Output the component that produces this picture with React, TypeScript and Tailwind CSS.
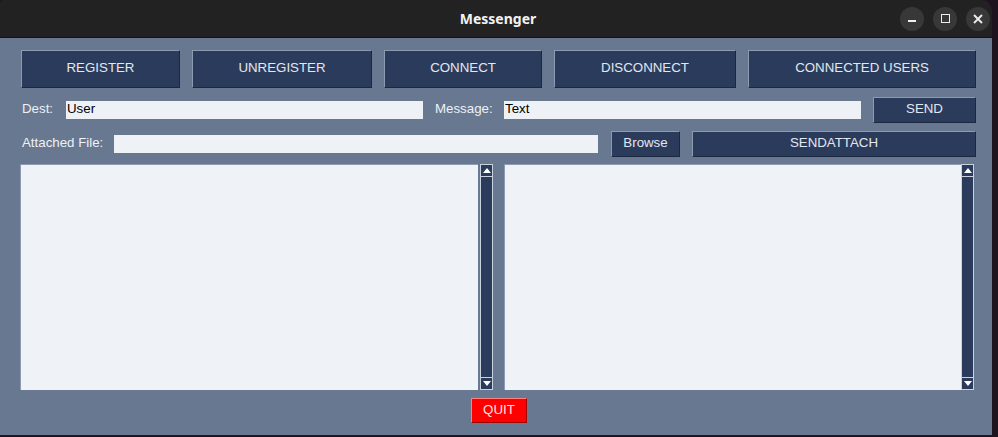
import React from "react";

const btn =
  "flex items-center justify-center bg-[#2b3b5c] text-[#e3e8f0] text-[13.3px] border border-t-[#8c9bb2] border-l-[#8c9bb2] border-b-[#1c2740] border-r-[#1c2740]";

function ScrollBar() {
  return (
    <div className="w-[13px] h-full flex flex-col bg-[#2b3b5c] border border-[#c9d2de]">
      <div className="h-[12px] flex items-center justify-center border-b border-[#c9d2de]">
        <svg width="8" height="5" viewBox="0 0 8 5">
          <path d="M0 5 L4 0 L8 5 Z" fill="#ffffff" />
        </svg>
      </div>
      <div className="flex-1" />
      <div className="h-[12px] flex items-center justify-center border-t border-[#c9d2de]">
        <svg width="8" height="5" viewBox="0 0 8 5">
          <path d="M0 0 L4 5 L8 0 Z" fill="#ffffff" />
        </svg>
      </div>
    </div>
  );
}

export default function App() {
  const font = { fontFamily: '"Liberation Sans", Arial, sans-serif' };
  return (
    <div className="w-[998px] h-[437px] bg-[#1d1420] overflow-hidden" style={font}>
      <div className="w-[992px] h-[436px] flex flex-col rounded-tl-[4px] rounded-tr-[11px] overflow-hidden">
        {/* Title bar */}
        <div className="h-[38px] bg-[#222222] border-b border-[#141414] flex items-center">
          <div
            className="flex-1 text-center text-[14px] font-bold text-[#f2f2f2] pl-[96px]"
            style={{ fontFamily: '"Noto Sans", "DejaVu Sans", sans-serif' }}
          >
            Messenger
          </div>
          <div className="flex items-center gap-[9px] pr-[2px]">
            <div className="w-[24px] h-[24px] rounded-full bg-[#383838] flex items-center justify-center">
              <div className="w-[8px] h-[2px] bg-[#eeeeee] mt-[4px]" />
            </div>
            <div className="w-[24px] h-[24px] rounded-full bg-[#383838] flex items-center justify-center">
              <div className="w-[9px] h-[9px] border-[1.5px] border-[#eeeeee]" />
            </div>
            <div className="w-[24px] h-[24px] rounded-full bg-[#383838] flex items-center justify-center">
              <svg width="10" height="10" viewBox="0 0 10 10">
                <path d="M1 1 L9 9 M9 1 L1 9" stroke="#eeeeee" strokeWidth="1.8" />
              </svg>
            </div>
          </div>
        </div>

        {/* Body */}
        <div className="flex-1 bg-[#687890] pl-[20px] pr-[16px] pt-[12px] flex flex-col border-b border-[#1a1a22]">
          {/* Top buttons */}
          <div className="flex gap-[12px] h-[38px] pl-[1px] leading-none">
            <div className={`${btn} w-[159px] pb-[3px]`}>REGISTER</div>
            <div className={`${btn} w-[180px] pb-[3px]`}>UNREGISTER</div>
            <div className={`${btn} w-[158px] pb-[3px]`}>CONNECT</div>
            <div className={`${btn} w-[182px] pb-[3px]`}>DISCONNECT</div>
            <div className={`${btn} w-[228px] pb-[3px]`}>CONNECTED USERS</div>
          </div>

          {/* Dest / Message row */}
          <div className="flex items-center h-[26px] mt-[9px] pl-[2px] text-[13.3px] text-[#eef1f5]">
            <span className="w-[44px] pb-[2px]">Dest:</span>
            <div className="w-[357px] h-[18px] bg-[#eef2f7] text-black px-[1px] leading-[16px]">User</div>
            <span className="ml-[12px] w-[69px] pb-[2px]">Message:</span>
            <div className="w-[357px] h-[18px] bg-[#eef2f7] text-black px-[1px] leading-[16px]">Text</div>
            <div className={`${btn} ml-[12px] w-[103px] h-[26px] pb-[2px]`}>SEND</div>
          </div>

          {/* Attach row */}
          <div className="flex items-center h-[26px] mt-[8px] pl-[2px] text-[13.3px] text-[#eef1f5]">
            <span className="w-[92px] pb-[2px]">Attached File:</span>
            <div className="w-[484px] h-[18px] bg-[#eef2f7]" />
            <div className={`${btn} ml-[13px] w-[69px] h-[26px] pb-[2px]`}>Browse</div>
            <div className={`${btn} ml-[12px] w-[284px] h-[26px] pb-[2px]`}>SENDATTACH</div>
          </div>

          {/* Text areas */}
          <div className="flex h-[226px] mt-[7px]">
            <div className="w-[458px] h-full bg-[#eff3f8] border-l border-t border-[#8c9bb2]" />
            <div className="ml-[2px] h-full">
              <ScrollBar />
            </div>
            <div className="ml-[11px] w-[457px] h-full bg-[#eff3f8] border-l border-t border-[#8c9bb2]" />
            <div className="h-full">
              <ScrollBar />
            </div>
          </div>

          {/* Quit */}
          <div className="flex justify-center mt-[8px] pl-[2px]">
            <div className="w-[56px] h-[25px] bg-[#ff0000] text-[#ffe3e3] text-[13.3px] pb-[2px] flex items-center justify-center border border-t-[#ff8080] border-l-[#ff8080] border-b-[#a00000] border-r-[#a00000]">
              QUIT
            </div>
          </div>
        </div>
      </div>
    </div>
  );
}
